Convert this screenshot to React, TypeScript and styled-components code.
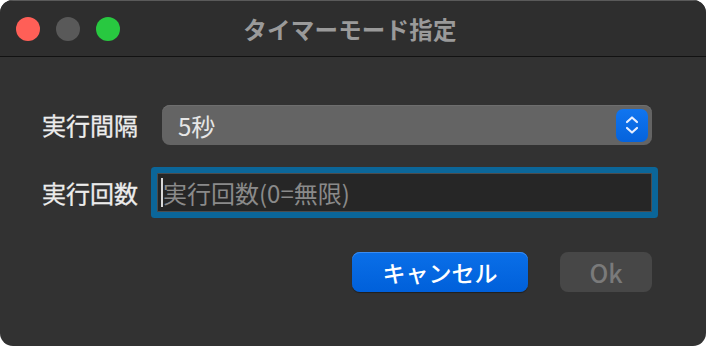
import React from "react";
import styled, { createGlobalStyle } from "styled-components";

const Global = createGlobalStyle`
  html, body { margin: 0; padding: 0; background: #ffffff; }
  body { font-family: "Noto Sans CJK JP", "Noto Sans", sans-serif; }
`;

const Window = styled.div`
  width: 706px;
  height: 346px;
  border-radius: 13px;
  overflow: hidden;
  background: #323232;
  display: flex;
  flex-direction: column;
`;

const TitleBar = styled.div`
  flex: none;
  background: #2e2e2e;
  border-top: 1px solid #5a5a5a;
  border-bottom: 1px solid #121212;
  box-sizing: border-box;
  height: 57px;
  display: grid;
  grid-template-columns: 1fr auto 1fr;
  align-items: center;
  padding: 0 16px;
`;

const Lights = styled.div`
  display: flex;
  gap: 16px;
`;

const Light = styled.span<{ $c: string }>`
  width: 24px;
  height: 24px;
  border-radius: 50%;
  background: ${(p) => p.$c};
`;

const Title = styled.div`
  font-size: 23.5px;
  font-weight: 700;
  color: #9a9a9a;
  letter-spacing: 0.2px;
  margin-right: 6px;
`;

const Body = styled.div`
  flex: 1;
  display: flex;
  flex-direction: column;
  padding: 48px 54px 0 42px;
`;

const Row = styled.div<{ $mt?: number }>`
  display: flex;
  align-items: center;
  margin-top: ${(p) => p.$mt ?? 0}px;
`;

const Label = styled.div`
  width: 96px;
  flex: none;
  font-size: 24px;
  color: #ececec;
  line-height: 1;
  -webkit-text-stroke: 0.3px #ececec;
`;

const Select = styled.div`
  margin-left: 24px;
  width: 490px;
  height: 40px;
  box-sizing: border-box;
  background: #646464;
  border-radius: 8px;
  display: flex;
  align-items: center;
  justify-content: space-between;
  padding: 0 4px 0 16px;
  box-shadow: inset 0 1px 0 #6e6e6e;
`;

const SelectText = styled.span`
  font-size: 24px;
  color: #e6e6e6;
`;

const Stepper = styled.div`
  width: 32px;
  height: 33px;
  border-radius: 7px;
  background: linear-gradient(#1075f0, #0563dc);
  display: flex;
  align-items: center;
  justify-content: center;
`;

const Field = styled.div`
  margin-left: 19px;
  width: 501px;
  height: 39px;
  box-sizing: border-box;
  background: #262626;
  border: 1px solid #4c4c4c;
  box-shadow: 0 0 0 6px #0b6699;
  border-radius: 1px;
  display: flex;
  align-items: center;
  padding-left: 3px;
`;

const Caret = styled.span`
  width: 2px;
  height: 29px;
  background: #d8d8d8;
  flex: none;
`;

const Placeholder = styled.span`
  font-size: 24px;
  color: #8a8a8a;
  white-space: nowrap;
`;

const Buttons = styled.div`
  display: flex;
  justify-content: flex-end;
  gap: 32px;
  margin-top: 40px;
`;

const Button = styled.div<{ $primary?: boolean }>`
  width: ${(p) => (p.$primary ? 176 : 92)}px;
  height: 40px;
  border-radius: 8px;
  display: flex;
  align-items: center;
  justify-content: center;
  font-size: ${(p) => (p.$primary ? 23 : 25)}px;
  font-weight: ${(p) => (p.$primary ? 500 : 500)};
  color: ${(p) => (p.$primary ? "#ffffff" : "#7a7a7a")};
  background: ${(p) =>
    p.$primary ? "linear-gradient(#0a6fe8, #0060da)" : "#474747"};
  box-shadow: ${(p) =>
    p.$primary ? "inset 0 1px 0 #3a8cf2, 0 1px 1px rgba(0,0,0,0.4)" : "none"};
`;

export default function App() {
  return (
    <>
      <Global />
      <Window>
        <TitleBar>
          <Lights>
            <Light $c="#ff5f57" />
            <Light $c="#595959" />
            <Light $c="#28c840" />
          </Lights>
          <Title>タイマーモード指定</Title>
          <div />
        </TitleBar>
        <Body>
          <Row>
            <Label>実行間隔</Label>
            <Select>
              <SelectText>5秒</SelectText>
              <Stepper>
                <svg width="16" height="22" viewBox="0 0 16 22" fill="none">
                  <path d="M3 8 L8 3.5 L13 8" stroke="#e6eeff" strokeWidth="2.2" strokeLinecap="round" strokeLinejoin="round" />
                  <path d="M3 14 L8 18.5 L13 14" stroke="#e6eeff" strokeWidth="2.2" strokeLinecap="round" strokeLinejoin="round" />
                </svg>
              </Stepper>
            </Select>
          </Row>
          <Row $mt={28}>
            <Label>実行回数</Label>
            <Field>
              <Caret />
              <Placeholder>実行回数(0=無限)</Placeholder>
            </Field>
          </Row>
          <Buttons>
            <Button $primary>キャンセル</Button>
            <Button>Ok</Button>
          </Buttons>
        </Body>
      </Window>
    </>
  );
}
